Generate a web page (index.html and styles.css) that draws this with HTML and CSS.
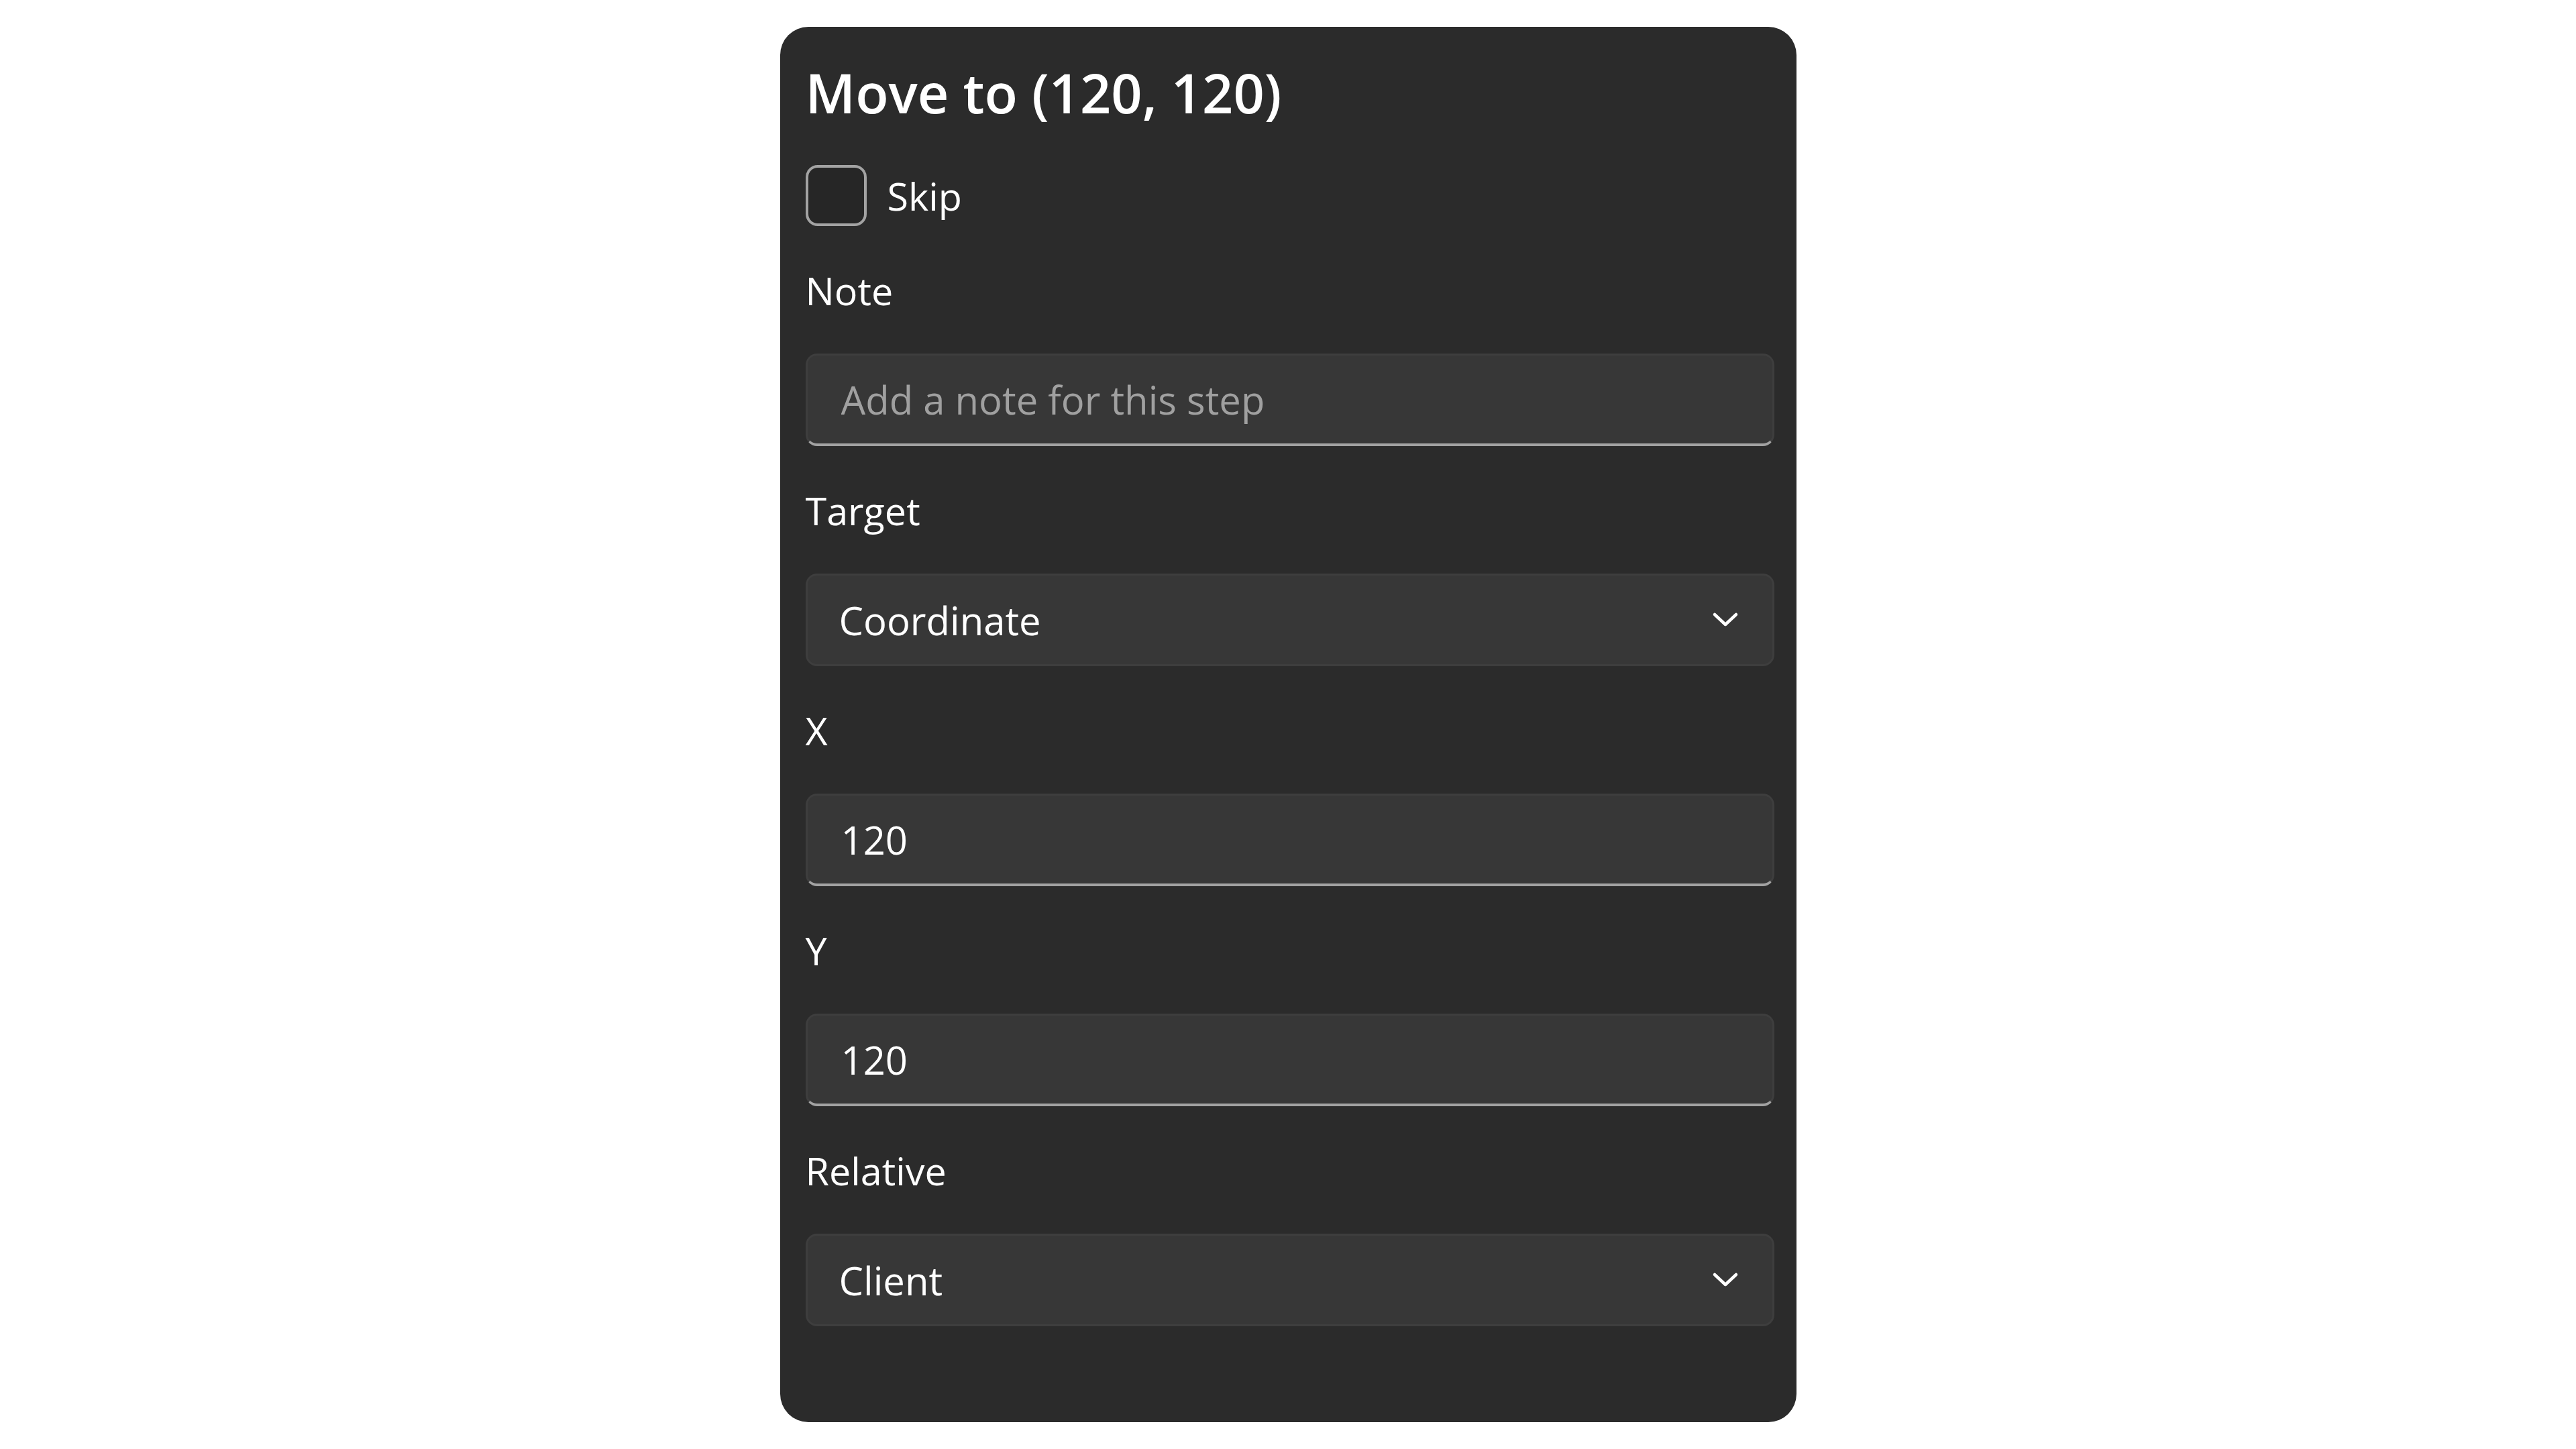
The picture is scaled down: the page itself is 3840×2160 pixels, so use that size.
FILE: index.html
```html
<!DOCTYPE html>
<html lang="en">
<head>
    <meta charset="UTF-8">
    <meta name="viewport" content="width=device-width, initial-scale=1.0">
    <title>Move to (120, 120)</title>
    <link rel="stylesheet" href="styles.css">
</head>
<body>
    <div class="panel">
        <h1 class="title">Move to (120, 120)</h1>

        <label class="check-row">
            <span class="check-box"></span>
            <span class="check-text">Skip</span>
        </label>

        <div class="field">
            <div class="field-label">Note</div>
            <input class="text-box" type="text" placeholder="Add a note for this step">
        </div>

        <div class="field">
            <div class="field-label">Target</div>
            <div class="combo">
                <span>Coordinate</span>
                <svg class="chevron" viewBox="0 0 40 24" width="40" height="24">
                    <polyline points="4,4 20,19 36,4" />
                </svg>
            </div>
        </div>

        <div class="field">
            <div class="field-label">X</div>
            <input class="text-box" type="text" value="120">
        </div>

        <div class="field">
            <div class="field-label">Y</div>
            <input class="text-box" type="text" value="120">
        </div>

        <div class="field">
            <div class="field-label">Relative</div>
            <div class="combo">
                <span>Client</span>
                <svg class="chevron" viewBox="0 0 40 24" width="40" height="24">
                    <polyline points="4,4 20,19 36,4" />
                </svg>
            </div>
        </div>
    </div>
</body>
</html>
```

FILE: styles.css
```css
body {
    margin: 0;
    height: 100vh;
    display: flex;
    justify-content: center;
    align-items: center;
    background-color: #ffffff;
    font-family: "Open Sans", "Noto Sans", sans-serif;
}

.panel {
    width: 1515px;
    box-sizing: border-box;
    padding: 41px 33px 143px 38px;
    display: flex;
    flex-direction: column;
    background-color: #2b2b2b;
    border-radius: 42px;
    color: #ffffff;
}

.title {
    margin: 0 0 52px 0;
    font-size: 81px;
    font-weight: 600;
    line-height: 113px;
}

.check-row {
    display: flex;
    align-items: center;
    gap: 31px;
}

.check-box {
    width: 91px;
    height: 91px;
    box-sizing: border-box;
    border: 4px solid #a3a3a3;
    border-radius: 18px;
    background-color: #262626;
}

.check-text,
.field-label {
    font-size: 57.5px;
    line-height: 80px;
}

.field {
    display: flex;
    flex-direction: column;
    margin-top: 56px;
}

.field-label {
    margin-bottom: 54px;
}

.text-box,
.combo {
    height: 138px;
    box-sizing: border-box;
    border: 3px solid #3e3e3e;
    border-radius: 17px;
    background-color: #373737;
    color: #ffffff;
    font-family: inherit;
    font-size: 58px;
}

.text-box {
    width: 100%;
    margin: 0;
    padding: 0 0 0 50px;
    border-bottom: 4px solid #a2a2a2;
    outline: none;
}

.text-box::placeholder {
    color: #a0a0a0;
}

.combo {
    display: flex;
    align-items: center;
    justify-content: space-between;
    padding: 0 50px 0 47px;
}

.chevron {
    fill: none;
    stroke: #ffffff;
    stroke-width: 4.5;
    stroke-linecap: round;
    stroke-linejoin: round;
}
```
